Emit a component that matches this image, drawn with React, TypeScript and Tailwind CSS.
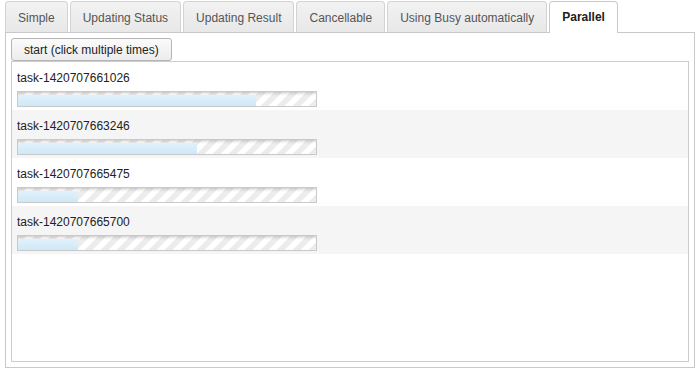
import React from "react";

const tabs = [
  "Simple",
  "Updating Status",
  "Updating Result",
  "Cancellable",
  "Using Busy automatically",
  "Parallel",
];

const tasks = [
  { name: "task-1420707661026", pct: 80 },
  { name: "task-1420707663246", pct: 60 },
  { name: "task-1420707665475", pct: 20 },
  { name: "task-1420707665700", pct: 20 },
];

const stripes =
  "bg-[linear-gradient(to_bottom,rgba(0,0,0,0.16),rgba(0,0,0,0.06)_2px,rgba(0,0,0,0)_4px),linear-gradient(135deg,#ececec_25%,transparent_25%,transparent_50%,#ececec_50%,#ececec_75%,transparent_75%)] bg-[length:100%_100%,16px_16px]";

function ProgressBar({ pct }: { pct: number }) {
  return (
    <div className={`relative h-[16px] w-[300px] border border-[#c9c9c9] bg-white ${stripes}`}>
      <div
        className="absolute left-0 top-[3px] bottom-0 bg-[linear-gradient(to_bottom,#e2f1fb,#cfe8f7)]"
        style={{ width: `${pct}%` }}
      />
    </div>
  );
}

export default function App() {
  const active = "Parallel";

  return (
    <div className="w-[700px] h-[374px] bg-white pt-[1px] px-[5px] font-['Liberation_Sans',Arial,sans-serif] text-[12px]">
      {/* Tabs */}
      <div className="flex items-end gap-[2px]">
        {tabs.map((t) =>
          t === active ? (
            <div
              key={t}
              className="relative z-10 mb-[-1px] flex h-[32px] items-center rounded-t-[4px] border border-b-0 border-[#c9c9c9] bg-white px-[12px] pb-[1px] font-bold text-[#212121]"
            >
              {t}
            </div>
          ) : (
            <div
              key={t}
              className="flex h-[31px] items-center rounded-t-[4px] border border-b-0 border-[#d3d3d3] bg-[linear-gradient(to_bottom,#f2f2f2,#e8e8e8)] px-[12px] pt-[1px] text-[#555555]"
            >
              {t}
            </div>
          )
        )}
      </div>

      {/* Panel */}
      <div className="flex h-[336px] flex-col border border-[#c9c9c9] p-[5px]">
        <div>
          <button className="h-[23px] rounded-[3px] border border-[#b5b5b5] bg-[linear-gradient(to_bottom,#fbfbfb,#ececec)] px-[12px] text-[12px] text-[#222222]">
            start (click multiple times)
          </button>
        </div>
        <div className="flex-1 border border-[#cccccc]">
          {tasks.map((t, i) => (
            <div
              key={t.name}
              className={`h-[48px] pl-[5px] pt-[7px] ${i % 2 === 1 ? "bg-[#f5f5f5]" : "bg-white"}`}
            >
              <div className="leading-[18px] text-[#222222]">{t.name}</div>
              <div className="mt-[4px]">
                <ProgressBar pct={t.pct} />
              </div>
            </div>
          ))}
        </div>
      </div>
    </div>
  );
}
